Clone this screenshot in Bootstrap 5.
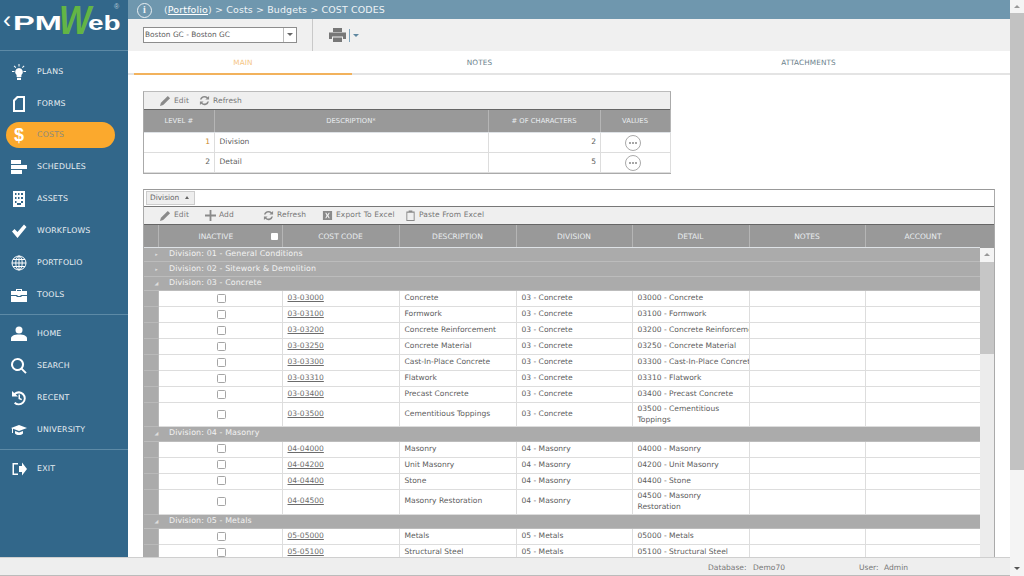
<!DOCTYPE html>
<html lang="en">
<head>
<meta charset="utf-8">
<title>Cost Codes</title>
<link href="https://cdn.jsdelivr.net/npm/bootstrap@5.3.0/dist/css/bootstrap.min.css" rel="stylesheet">
<style>
html,body{height:576px;overflow:hidden;margin:0}
body{font-family:"DejaVu Sans",sans-serif;font-size:7.55px;color:#5c5c5c;background:#fff}
.pm-left{width:1010px;height:576px}
.pm-upper{height:557px;overflow:hidden}
.pm-side{width:128px;background:#32678a;color:#e8eef2;flex:none}
.pm-logo{height:51px;border-bottom:1px solid #5d8aa6;position:relative;color:#fff;overflow:hidden}
.pm-back{position:absolute;left:3px;top:7px;font-size:24px;line-height:26px;font-family:"Liberation Sans",sans-serif}
.pm-l1,.pm-l2,.pm-l3,.pm-reg{position:absolute;font-family:"Liberation Sans",sans-serif;font-weight:700;line-height:1}
.pm-l1{left:13px;top:12px;font-size:21px;transform:scaleX(1.55);transform-origin:left}
.pm-l2{left:59px;top:0;font-size:40px;font-style:italic;color:#63b545;transform:scaleX(.85);transform-origin:left}
.pm-l3{left:88px;top:12px;font-size:21px;transform:scaleX(1.33);transform-origin:left}
.pm-reg{left:114px;top:3px;font-size:7px;font-weight:400;color:#b9cbd7}
.pm-spacer{height:5px}
.pm-nav{height:32px;padding-left:11px;font-size:7.8px;letter-spacing:.2px}
.pm-nav svg{width:16px;height:16px;flex:none;fill:#fff;margin-right:10px}
.pm-nav.pm-on{background:#fba92d;color:#8b8a7c;margin:2px 13px 3px 6px;height:26px;border-radius:14px;padding-left:5px}
.pm-dollar{width:16px;flex:none;margin-right:10px;color:#fff;font:700 18px/1 "Liberation Sans",sans-serif;text-align:center}
.pm-sep{border-top:1px solid #5d8aa6;margin:3px 0}
.pm-main{flex:1;min-width:0}
.pm-crumb{height:19px;background:#6f97ae;color:#eef3f6;font-size:9.45px;padding-left:9px;letter-spacing:.15px;padding-top:1px}
.pm-crumb u{color:#fff}
.pm-info{width:15px;height:15px;border:1.5px solid #e8eef2;border-radius:50%;font:700 10px/12px "Liberation Serif",serif;text-align:center;margin-right:12px}
.pm-tools{height:32px;background:#f0f0f0;padding-left:15px}
.pm-select{width:154px;height:16px;background:#fff;border:1px solid #8d8d8d;padding-left:1px;font-size:7.4px}
.pm-select b{width:13px;height:14px;border-left:1px solid #bbb;position:relative;display:block}
.pm-select b::after,.pm-caret{content:"";border:3px solid transparent;border-top:3.5px solid #666;border-bottom:0;display:block}
.pm-select b::after{margin:5px 0 0 3px;width:0}
.pm-caret{width:0}
.pm-vsep{width:1px;height:32px;background:#c9c9c9;margin:0 16px 0 15px}
.pm-bar{width:1px;height:13px;background:#7fa4bb;margin:0 3px 0 3px}
.pm-tabs{height:24px;border-bottom:2px solid #e4e4e4;font-size:7.3px;padding-left:6px;color:#6b7f8c;letter-spacing:.1px}
.pm-tab{height:24px;text-align:center;line-height:23px}
.pm-tab1{width:218px;color:#f5c583;border-bottom:2px solid #f2b25c}
.pm-tab2{width:255px}
.pm-tab3{width:403px}
.pm-body{padding:16px 0 0 15px}
.pm-box1{width:528px;border:1px solid #aaa;border-top-color:#bbb;margin-bottom:15px}
.pm-tbar{background:#efefef;color:#777;font-size:7.5px;letter-spacing:.1px}
.pm-tbar svg{width:11px;height:11px;fill:#8a8a8a;margin-right:3px;flex:none}
.pm-tbar .pm-act{display:flex;align-items:center}
.pm-tb1{height:18px;padding-left:16px;gap:10px;border-bottom:1px solid #666}
.pm-tb2{height:18px;padding-left:16px;border-bottom:1px solid #666}
table.pm-t{table-layout:fixed;border-collapse:collapse;margin:0;width:auto}
.pm-t th{background:#999;color:#e9edf0;font-weight:400;text-align:center;font-size:6.8px;padding:1px 0 0;border-right:1px solid #b5b5b5;overflow:hidden;vertical-align:middle}
.pm-t td{padding:0 4px 0 5px;border:1px solid #ddd;border-top:0;border-left:0;white-space:nowrap;overflow:hidden;color:#5c5c5c;background:#fff;line-height:10.5px;vertical-align:middle}
.pm-t1 th{height:22px}
.pm-t1 td{height:20px;padding-top:1px}
.pm-t td.pm-num{text-align:right;padding-right:3.5px}
.pm-o{color:#c9882b}
.pm-dots{width:16px;height:16px;border:1px solid #aaa;border-radius:50%;margin-left:19px;gap:1px;background:#fff}
.pm-dots i{width:2px;height:2px;background:#888;border-radius:50%;display:block}
.pm-box2{width:852px;border:1px solid #aaa;border-bottom:0;border-top-color:#999}
.pm-chipbar{height:17px;padding:1px 2px;border-bottom:1px solid #777;background:#fff}
.pm-chip{width:49px;height:14px;background:#eee;border:1px solid #ccc;color:#666;padding-left:3px;gap:6px;font-size:7.4px}
.pm-chip i{display:block;border:2.5px solid transparent;border-bottom:3px solid #666;border-top:0}
.pm-gridwrap{position:relative}
.pm-t2 th{height:23px;border-right-color:#b5b5b5;font-size:7.5px}
.pm-t2 td{height:16px}
.pm-t2 tr.pm-tall td{height:25px}
.pm-t2 tr.pm-tall1 td{height:24px}
.pm-t2 td.pm-rh{background:#ababab;border-color:#b9b9b9;padding:0}
.pm-t2 td.pm-c{text-align:center;padding:0 0 0 2px}
.pm-t2 td a{color:#6b6b6b;text-decoration:underline}
.pm-t2 tr.pm-g td{height:14.4px;background:#ababab;color:#f2f2f2;font-size:7.9px;letter-spacing:.12px;border:0;border-bottom:1px solid #bcbcbc;padding:0}
.pm-gi{display:inline-block;width:25px;color:#ddd;font-size:5px;text-align:center;vertical-align:middle}
.pm-check{width:9px;height:9px;border:1px solid #a5a5a5;border-radius:1.5px;background:#fff;display:inline-block;vertical-align:middle}
.pm-headin{padding:0 4px 0 40px}
.pm-headin i{width:7px;height:7px;background:#fff;display:block;border-radius:1px;margin-left:auto}
.pm-sb{position:absolute;right:0;top:0;width:14px;bottom:-400px;background:#ececec}
.pm-sb-cap{height:23px;background:#999}
.pm-sb-up{height:14px;background:#f4f4f4}
.pm-sb-up::after,.pm-pgup::after{content:"";display:block;margin:auto;border:3px solid transparent;border-bottom:3px solid #999;border-top:0;transform:translateY(5px);width:0}
.pm-sb-th{height:92px;background:#c6c6c6}
.pm-foot{height:19px;background:#eee;border-top:1px solid #cfcfcf;border-bottom:1px solid #bbb;color:#777;position:relative}
.pm-foot span{position:absolute;top:4px}
.pm-pg{width:14px;background:#f4f4f4;flex:none;position:relative}
.pm-pgup{height:13px}
.pm-pgth{height:457px;background:#c2c2c2}
.pm-pgdn{position:absolute;left:4px;bottom:6px;border:3px solid transparent;border-top:3.5px solid #555;border-bottom:0}
</style>
</head>
<body>
<div class="d-flex">
<div class="pm-left">
<div class="pm-upper d-flex">
<nav class="pm-side">
  <div class="pm-logo">
    <span class="pm-back">‹</span><span class="pm-l1">PM</span><span class="pm-l3">eb</span><span class="pm-l2">W</span><span class="pm-reg">®</span>
  </div>
  <div class="pm-spacer"></div>
  <div class="pm-nav d-flex align-items-center"><svg viewBox="0 0 16 16"><path d="M8 4a4 4 0 0 0-2.4 7.1V13h4.800v-1.900A4 4 0 0 0 8 4zM6 13.800h4V16H6zM7.500 0h1v2.500h-1zM1 7h2.500v1H1zM12.500 7H15v1h-2.500zM2.700 2.200l.7-.7 1.800 1.800-.7.7zM11 3.300l1.800-1.800.7.7-1.800 1.800z"/></svg>PLANS</div>
  <div class="pm-nav d-flex align-items-center"><svg viewBox="0 0 16 16"><path fill-rule="evenodd" d="M6 0h8v16H2V4zM7 2 4 5v9h8V2z"/></svg>FORMS</div>
  <div class="pm-nav pm-on d-flex align-items-center"><span class="pm-dollar">$</span>COSTS</div>
  <div class="pm-nav d-flex align-items-center"><svg viewBox="0 0 16 16"><path d="M0 1h10v4H0zM0 6h16v4H0zM0 11h11v4H0z"/></svg>SCHEDULES</div>
  <div class="pm-nav d-flex align-items-center"><svg viewBox="0 0 16 16"><path fill-rule="evenodd" d="M2 0h12v16H2zM4 2v2h1.500V2zM7 2v2h1.500V2zM10 2v2h2V2zM4 6v2h1.500V6zM7 6v2h1.500V6zM10 6v2h2V6zM4 10v2h1.500v-2zM10 10v2h2v-2zM6 14h4v-2H6z"/></svg>ASSETS</div>
  <div class="pm-nav d-flex align-items-center"><svg viewBox="0 0 16 16"><path d="M1 8.500 3.500 6l3 3L13 1.500 15.500 4 6.500 15z"/></svg>WORKFLOWS</div>
  <div class="pm-nav d-flex align-items-center"><svg viewBox="0 0 16 16" style="fill:none;stroke:#fff;stroke-width:1"><circle cx="8" cy="8" r="7"/><ellipse cx="8" cy="8" rx="3.200" ry="7"/><path d="M8 1v14M1 8h14M2 4.500h12M2 11.500h12"/></svg>PORTFOLIO</div>
  <div class="pm-nav d-flex align-items-center"><svg viewBox="0 0 16 16"><path d="M5 2h6v2H10V3H6v1H5zM0 4h16v4H9.500v1h-3V8H0zM0 9h5.500v1h5V9H16v6H0z"/></svg>TOOLS</div>
  <div class="pm-sep"></div>
  <div class="pm-nav d-flex align-items-center"><svg viewBox="0 0 16 16"><circle cx="8" cy="4" r="3.500"/><path d="M0 15v-2.500C0 10 3 8.500 8 8.500s8 1.500 8 4V15z"/></svg>HOME</div>
  <div class="pm-nav d-flex align-items-center"><svg viewBox="0 0 16 16"><path fill-rule="evenodd" d="M6.500 0a6.500 6.500 0 0 1 5.200 10.400l4 4-1.400 1.400-4-4A6.500 6.500 0 1 1 6.500 0zm0 2a4.500 4.500 0 1 0 0 9 4.500 4.500 0 0 0 0-9z"/></svg>SEARCH</div>
  <div class="pm-nav d-flex align-items-center"><svg viewBox="0 0 16 16"><path fill-rule="evenodd" d="M1 1l2.200 2A7 7 0 1 1 3 13.500l1.300-1.500A5 5 0 1 0 4.700 4.500L7 6.500H1zM7.500 4.500h1.500V8l2 1-.6 1.300L7.500 9z"/></svg>RECENT</div>
  <div class="pm-nav d-flex align-items-center"><svg viewBox="0 0 16 16"><path d="M8 3 16 6 8 9 2 6.800V11H1V6.400L0 6zM4 9l4 1.500L12 9v2.500c-1 1-2.500 1.500-4 1.500s-3-.5-4-1.500z"/></svg>UNIVERSITY</div>
  <div class="pm-sep"></div>
  <div class="pm-nav d-flex align-items-center"><svg viewBox="0 0 16 16"><path fill-rule="evenodd" d="M1.500 2H7v1.500H3V12.500h4V14H1.500zM8 5h3V1.500L16 8l-5 6.500V11H8z"/></svg>EXIT</div>
</nav>
<main class="pm-main">
  <div class="pm-crumb d-flex align-items-center"><span class="pm-info">i</span><span>(<u>Portfolio</u>) &gt; Costs &gt; Budgets &gt; COST CODES</span></div>
  <div class="pm-tools d-flex align-items-center">
    <div class="pm-select d-flex align-items-center justify-content-between"><span>Boston GC - Boston GC</span><b></b></div>
    <div class="pm-vsep"></div>
    <svg width="17" height="16" viewBox="0 0 17 16" fill="#777"><path d="M4 1h9v4H4zM0 5.500h17V12h-3V9.500H3V12H0zM4 10.500h9V15H4z"/></svg>
    <span class="pm-bar"></span><span class="pm-caret" style="border-top-color:#5f87a0"></span>
  </div>
  <div class="pm-tabs d-flex">
    <div class="pm-tab pm-tab1">MAIN</div><div class="pm-tab pm-tab2">NOTES</div><div class="pm-tab pm-tab3">ATTACHMENTS</div>
  </div>
  <div class="pm-body">
    <div class="pm-box1">
      <div class="pm-tbar pm-tb1 d-flex align-items-center">
        <span class="pm-act"><svg viewBox="0 0 12 12"><path d="M0 12l1-3.500L8.500 1l2.500 2.500L3.500 11z"/></svg>Edit</span>
        <span class="pm-act"><svg viewBox="0 0 12 12"><path d="M6 1a5 5 0 0 1 3.500 1.400L11 1v4H7l1.400-1.400A3.400 3.400 0 0 0 2.800 5H1.100A5 5 0 0 1 6 1zM1 7h4L3.600 8.400A3.400 3.400 0 0 0 9.200 7h1.700A5 5 0 0 1 2.500 9.600L1 11z"/></svg>Refresh</span>
      </div>
      <table class="table pm-t pm-t1" style="width:526px">
        <colgroup><col style="width:70px"><col style="width:274px"><col style="width:112px"><col style="width:70px"></colgroup>
        <thead><tr><th>LEVEL #</th><th>DESCRIPTION*</th><th># OF CHARACTERS</th><th>VALUES</th></tr></thead>
        <tbody>
          <tr><td class="pm-num"><span class="pm-o">1</span></td><td>Division</td><td class="pm-num">2</td><td><div class="pm-dots d-flex align-items-center justify-content-center"><i></i><i></i><i></i></div></td></tr>
          <tr><td class="pm-num">2</td><td>Detail</td><td class="pm-num">5</td><td><div class="pm-dots d-flex align-items-center justify-content-center"><i></i><i></i><i></i></div></td></tr>
        </tbody>
      </table>
    </div>
    <div class="pm-box2">
      <div class="pm-chipbar"><div class="pm-chip d-flex align-items-center">Division<i></i></div></div>
      <div class="pm-tbar pm-tb2 d-flex align-items-center">
        <span class="pm-act" style="width:45px"><svg viewBox="0 0 12 12"><path d="M0 12l1-3.500L8.500 1l2.500 2.500L3.500 11z"/></svg>Edit</span>
        <span class="pm-act" style="width:58px"><svg viewBox="0 0 12 12"><path d="M5 0h2v5h5v2H7v5H5V7H0V5h5z"/></svg>Add</span>
        <span class="pm-act" style="width:59px"><svg viewBox="0 0 12 12"><path d="M6 1a5 5 0 0 1 3.500 1.400L11 1v4H7l1.400-1.400A3.400 3.400 0 0 0 2.800 5H1.100A5 5 0 0 1 6 1zM1 7h4L3.600 8.400A3.400 3.400 0 0 0 9.200 7h1.700A5 5 0 0 1 2.500 9.600L1 11z"/></svg>Refresh</span>
        <span class="pm-act" style="width:83px"><svg viewBox="0 0 12 12"><path fill-rule="evenodd" d="M1 1h10v10H1zM3.500 3 5 6 3.500 9h1.300L6 6.900 7.200 9h1.300L7 6l1.500-3H7.200L6 5.100 4.800 3z"/></svg>Export To Excel</span>
        <span class="pm-act"><svg viewBox="0 0 12 12"><path fill-rule="evenodd" d="M1.500 1.500H4V.5h4v1h2.500V12h-9zM2.500 3v8h7V3z"/></svg>Paste From Excel</span>
      </div>
      <div class="pm-gridwrap">
      <table class="table pm-t pm-t2" style="width:837px">
        <colgroup><col style="width:14px"><col style="width:124px"><col style="width:117px"><col style="width:117px"><col style="width:116px"><col style="width:117px"><col style="width:116px"><col style="width:116px"></colgroup>
        <thead><tr><th></th><th><div class="pm-headin d-flex align-items-center"><span>INACTIVE</span><i></i></div></th><th>COST CODE</th><th>DESCRIPTION</th><th>DIVISION</th><th>DETAIL</th><th>NOTES</th><th>ACCOUNT</th></tr></thead>
        <tbody>
<tr class="pm-g"><td colspan="8"><span class="pm-gi">▸</span>Division: 01 - General Conditions</td></tr>
<tr class="pm-g"><td colspan="8"><span class="pm-gi">▸</span>Division: 02 - Sitework &amp; Demolition</td></tr>
<tr class="pm-g"><td colspan="8"><span class="pm-gi">◢</span>Division: 03 - Concrete</td></tr>
<tr><td class="pm-rh"></td><td class="pm-c"><span class="pm-check"></span></td><td><a href="#">03-03000</a></td><td>Concrete</td><td>03 - Concrete</td><td>03000 - Concrete</td><td></td><td></td></tr>
<tr><td class="pm-rh"></td><td class="pm-c"><span class="pm-check"></span></td><td><a href="#">03-03100</a></td><td>Formwork</td><td>03 - Concrete</td><td>03100 - Formwork</td><td></td><td></td></tr>
<tr><td class="pm-rh"></td><td class="pm-c"><span class="pm-check"></span></td><td><a href="#">03-03200</a></td><td>Concrete Reinforcement</td><td>03 - Concrete</td><td>03200 - Concrete Reinforcement</td><td></td><td></td></tr>
<tr><td class="pm-rh"></td><td class="pm-c"><span class="pm-check"></span></td><td><a href="#">03-03250</a></td><td>Concrete Material</td><td>03 - Concrete</td><td>03250 - Concrete Material</td><td></td><td></td></tr>
<tr><td class="pm-rh"></td><td class="pm-c"><span class="pm-check"></span></td><td><a href="#">03-03300</a></td><td>Cast-In-Place Concrete</td><td>03 - Concrete</td><td>03300 - Cast-In-Place Concrete</td><td></td><td></td></tr>
<tr><td class="pm-rh"></td><td class="pm-c"><span class="pm-check"></span></td><td><a href="#">03-03310</a></td><td>Flatwork</td><td>03 - Concrete</td><td>03310 - Flatwork</td><td></td><td></td></tr>
<tr><td class="pm-rh"></td><td class="pm-c"><span class="pm-check"></span></td><td><a href="#">03-03400</a></td><td>Precast Concrete</td><td>03 - Concrete</td><td>03400 - Precast Concrete</td><td></td><td></td></tr>
<tr class="pm-tall1"><td class="pm-rh"></td><td class="pm-c"><span class="pm-check"></span></td><td><a href="#">03-03500</a></td><td>Cementitious Toppings</td><td>03 - Concrete</td><td>03500 - Cementitious<br>Toppings</td><td></td><td></td></tr>
<tr class="pm-g"><td colspan="8"><span class="pm-gi">◢</span>Division: 04 - Masonry</td></tr>
<tr><td class="pm-rh"></td><td class="pm-c"><span class="pm-check"></span></td><td><a href="#">04-04000</a></td><td>Masonry</td><td>04 - Masonry</td><td>04000 - Masonry</td><td></td><td></td></tr>
<tr><td class="pm-rh"></td><td class="pm-c"><span class="pm-check"></span></td><td><a href="#">04-04200</a></td><td>Unit Masonry</td><td>04 - Masonry</td><td>04200 - Unit Masonry</td><td></td><td></td></tr>
<tr><td class="pm-rh"></td><td class="pm-c"><span class="pm-check"></span></td><td><a href="#">04-04400</a></td><td>Stone</td><td>04 - Masonry</td><td>04400 - Stone</td><td></td><td></td></tr>
<tr class="pm-tall"><td class="pm-rh"></td><td class="pm-c"><span class="pm-check"></span></td><td><a href="#">04-04500</a></td><td>Masonry Restoration</td><td>04 - Masonry</td><td>04500 - Masonry<br>Restoration</td><td></td><td></td></tr>
<tr class="pm-g"><td colspan="8"><span class="pm-gi">◢</span>Division: 05 - Metals</td></tr>
<tr><td class="pm-rh"></td><td class="pm-c"><span class="pm-check"></span></td><td><a href="#">05-05000</a></td><td>Metals</td><td>05 - Metals</td><td>05000 - Metals</td><td></td><td></td></tr>
<tr><td class="pm-rh"></td><td class="pm-c"><span class="pm-check"></span></td><td><a href="#">05-05100</a></td><td>Structural Steel</td><td>05 - Metals</td><td>05100 - Structural Steel</td><td></td><td></td></tr>
        </tbody>
      </table>
      <div class="pm-sb"><div class="pm-sb-cap"></div><div class="pm-sb-up"></div><div class="pm-sb-th"></div></div>
      </div>
    </div>
  </div>
</main>
</div>
<footer class="pm-foot"><span style="left:708px">Database:</span><span style="left:753px">Demo70</span><span style="left:859px">User:</span><span style="left:884px">Admin</span></footer>
</div>
<div class="pm-pg"><div class="pm-pgup"></div><div class="pm-pgth"></div><div class="pm-pgdn"></div></div>
</div>
<script src="https://cdn.jsdelivr.net/npm/bootstrap@5.3.0/dist/js/bootstrap.bundle.min.js"></script>
</body>
</html>
